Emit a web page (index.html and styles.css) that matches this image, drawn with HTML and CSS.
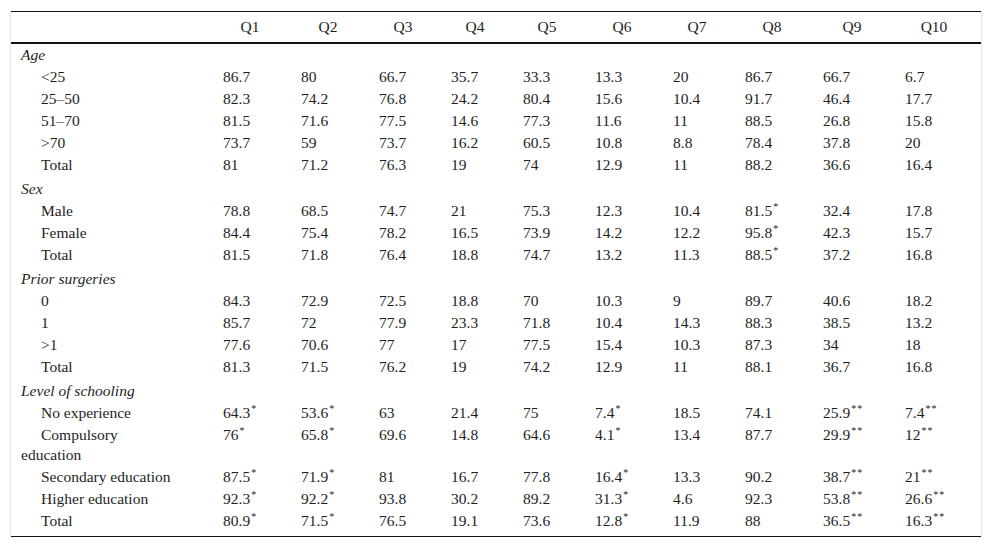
FILE: index.html
```html
<!DOCTYPE html>
<html lang="en">
<head>
<meta charset="utf-8">
<title>Table</title>
<link rel="stylesheet" href="styles.css">
</head>
<body>
<div class="frame">
<table class="data">
<colgroup>
<col class="c-label"><col class="c78"><col class="c78"><col class="c72"><col class="c72"><col class="c72"><col class="c78"><col class="c72"><col class="c78"><col class="c82"><col class="c82">
</colgroup>
<thead>
<tr><th></th><th>Q1</th><th>Q2</th><th>Q3</th><th>Q4</th><th>Q5</th><th>Q6</th><th>Q7</th><th>Q8</th><th>Q9</th><th>Q10</th></tr>
</thead>
<tbody>
<tr class="cat first"><td colspan="11">Age</td></tr>
<tr><td class="sub">&lt;25</td><td>86.7</td><td>80</td><td>66.7</td><td>35.7</td><td>33.3</td><td>13.3</td><td>20</td><td>86.7</td><td>66.7</td><td>6.7</td></tr>
<tr><td class="sub">25–50</td><td>82.3</td><td>74.2</td><td>76.8</td><td>24.2</td><td>80.4</td><td>15.6</td><td>10.4</td><td>91.7</td><td>46.4</td><td>17.7</td></tr>
<tr><td class="sub">51–70</td><td>81.5</td><td>71.6</td><td>77.5</td><td>14.6</td><td>77.3</td><td>11.6</td><td>11</td><td>88.5</td><td>26.8</td><td>15.8</td></tr>
<tr><td class="sub">&gt;70</td><td>73.7</td><td>59</td><td>73.7</td><td>16.2</td><td>60.5</td><td>10.8</td><td>8.8</td><td>78.4</td><td>37.8</td><td>20</td></tr>
<tr><td class="sub">Total</td><td>81</td><td>71.2</td><td>76.3</td><td>19</td><td>74</td><td>12.9</td><td>11</td><td>88.2</td><td>36.6</td><td>16.4</td></tr>
<tr class="cat"><td colspan="11">Sex</td></tr>
<tr><td class="sub">Male</td><td>78.8</td><td>68.5</td><td>74.7</td><td>21</td><td>75.3</td><td>12.3</td><td>10.4</td><td>81.5<sup>*</sup></td><td>32.4</td><td>17.8</td></tr>
<tr><td class="sub">Female</td><td>84.4</td><td>75.4</td><td>78.2</td><td>16.5</td><td>73.9</td><td>14.2</td><td>12.2</td><td>95.8<sup>*</sup></td><td>42.3</td><td>15.7</td></tr>
<tr><td class="sub">Total</td><td>81.5</td><td>71.8</td><td>76.4</td><td>18.8</td><td>74.7</td><td>13.2</td><td>11.3</td><td>88.5<sup>*</sup></td><td>37.2</td><td>16.8</td></tr>
<tr class="cat"><td colspan="11">Prior surgeries</td></tr>
<tr><td class="sub">0</td><td>84.3</td><td>72.9</td><td>72.5</td><td>18.8</td><td>70</td><td>10.3</td><td>9</td><td>89.7</td><td>40.6</td><td>18.2</td></tr>
<tr><td class="sub">1</td><td>85.7</td><td>72</td><td>77.9</td><td>23.3</td><td>71.8</td><td>10.4</td><td>14.3</td><td>88.3</td><td>38.5</td><td>13.2</td></tr>
<tr><td class="sub">&gt;1</td><td>77.6</td><td>70.6</td><td>77</td><td>17</td><td>77.5</td><td>15.4</td><td>10.3</td><td>87.3</td><td>34</td><td>18</td></tr>
<tr><td class="sub">Total</td><td>81.3</td><td>71.5</td><td>76.2</td><td>19</td><td>74.2</td><td>12.9</td><td>11</td><td>88.1</td><td>36.7</td><td>16.8</td></tr>
<tr class="cat"><td colspan="11">Level of schooling</td></tr>
<tr><td class="sub">No experience</td><td>64.3<sup>*</sup></td><td>53.6<sup>*</sup></td><td>63</td><td>21.4</td><td>75</td><td>7.4<sup>*</sup></td><td>18.5</td><td>74.1</td><td>25.9<sup>**</sup></td><td>7.4<sup>**</sup></td></tr>
<tr><td class="sub">Compulsory<br>education</td><td>76<sup>*</sup></td><td>65.8<sup>*</sup></td><td>69.6</td><td>14.8</td><td>64.6</td><td>4.1<sup>*</sup></td><td>13.4</td><td>87.7</td><td>29.9<sup>**</sup></td><td>12<sup>**</sup></td></tr>
<tr><td class="sub">Secondary education</td><td>87.5<sup>*</sup></td><td>71.9<sup>*</sup></td><td>81</td><td>16.7</td><td>77.8</td><td>16.4<sup>*</sup></td><td>13.3</td><td>90.2</td><td>38.7<sup>**</sup></td><td>21<sup>**</sup></td></tr>
<tr><td class="sub">Higher education</td><td>92.3<sup>*</sup></td><td>92.2<sup>*</sup></td><td>93.8</td><td>30.2</td><td>89.2</td><td>31.3<sup>*</sup></td><td>4.6</td><td>92.3</td><td>53.8<sup>**</sup></td><td>26.6<sup>**</sup></td></tr>
<tr class="last"><td class="sub">Total</td><td>80.9<sup>*</sup></td><td>71.5<sup>*</sup></td><td>76.5</td><td>19.1</td><td>73.6</td><td>12.8<sup>*</sup></td><td>11.9</td><td>88</td><td>36.5<sup>**</sup></td><td>16.3<sup>**</sup></td></tr>
</tbody>
</table>
</div>
</body>
</html>
```
FILE: styles.css
```css
html, body {
  margin: 0;
  padding: 0;
  background: #ffffff;
}

body {
  font-family: "Liberation Serif", "Times New Roman", serif;
  font-size: 15.5px;
  color: #1e1e1e;
}

.frame {
  margin: 11px 0 0 10px;
  width: 970px;
  border-left: 1px solid #e6e6e6;
  border-right: 1px solid #e6e6e6;
}

.data {
  width: 970px;
  table-layout: fixed;
  border-collapse: collapse;
  border-top: 1px solid #111111;
  border-bottom: 1px solid #111111;
}

.c-label { width: 206px; }
.c78 { width: 78px; }
.c72 { width: 72px; }
.c82 { width: 82px; }

.data th {
  font-weight: normal;
  text-align: center;
  height: 30px;
  padding: 0 12px 0 0;
  line-height: 20px;
  border-bottom: 2px solid #111111;
}

.data td {
  padding: 1px 0 1px 6px;
  line-height: 20px;
  text-align: left;
  vertical-align: top;
  white-space: nowrap;
}

.data td:first-child {
  padding-left: 10px;
  white-space: normal;
}

.data td.sub {
  text-indent: 20px;
}

.data tr.cat td {
  font-style: italic;
  padding-top: 3px;
}

.data tr.cat.first td {
  padding-top: 1px;
}

.data tr.last td {
  padding-bottom: 5px;
}

.data sup {
  font-size: 10px;
  line-height: 0;
  vertical-align: 0;
  position: relative;
  top: -6px;
  margin-left: 1px;
  letter-spacing: 1px;
}
```
